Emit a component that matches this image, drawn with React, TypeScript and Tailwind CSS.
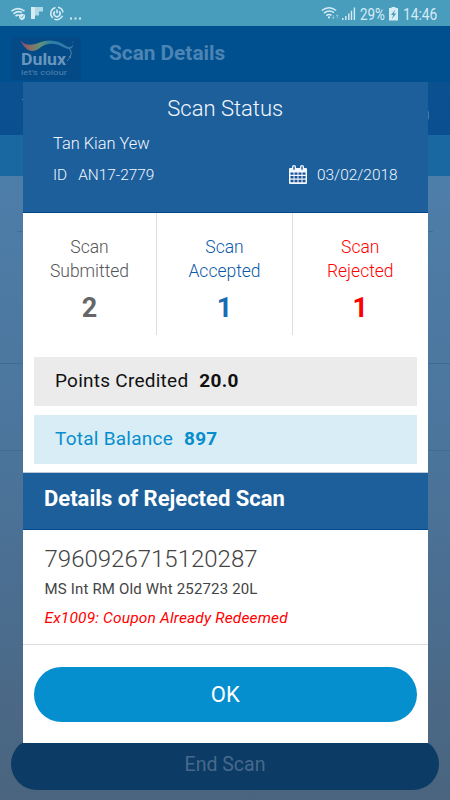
import type { ReactNode } from 'react';

const counts = [
  ['Scan', 'Submitted', '2', 'text-[#555]', 'text-[#666]'],
  ['Scan', 'Accepted', '1', 'text-[#0c59a8]', 'text-[#1b6bb2]'],
  ['Scan', 'Rejected', '1', 'text-[#ff0000]', 'text-[#ff0000]'],
];

function StatusBar() {
  return (
    <div className="flex h-[26px] shrink-0 items-center bg-[#489dbd] text-[#d5ecf5]">
      <svg className="h-[26px] w-[90px]" viewBox="0 0 90 26" fill="none" stroke="currentColor">
        <path d="M11.500 11.200Q18 6 24.500 11.200M13.500 13.800Q18 10 22 12.700M15.500 16.200Q17.500 14.500 19 15.400" strokeWidth="1.600" />
        <path d="M22 13.800l3 1v2.100q0 2.300-3 3.400-3-1.100-3-3.400v-2.100z" fill="currentColor" stroke="none" />
        <path d="M20.600 16.600l1.100 1.200 2-2.400" stroke="#489dbd" strokeWidth=".8" />
        <path d="M31 7h12v4.500h-4v4h-4V19h-4z" fill="currentColor" stroke="none" opacity=".75" />
        <path d="M31 7h4v12h-4z" fill="currentColor" stroke="none" />
        <path d="M55.500 7.400A6.200 6.200 0 0 0 52.800 18M54.300 19.100A6.200 6.200 0 0 0 62.500 15.800M63 12.500A6.200 6.200 0 0 0 58 7.300" strokeWidth="1.500" />
        <path d="M54.800 11.400a3.100 3.100 0 1 0 4.400 0M57 9.500v3.700" strokeWidth="1.600" />
        <path d="M70 17.500h2v2h-2zM74.500 17.500h2v2h-2zM79 17.500h2v2h-2z" fill="currentColor" stroke="none" />
      </svg>
      <svg className="ml-auto h-[26px] w-[38px]" viewBox="320 0 38 26" fill="none" stroke="currentColor">
        <path d="M321.800 10.500Q329 5 336.200 10.500M324 13.200Q329 9.200 334 12.700M326.300 15.700Q329 13.600 331.500 15.300" strokeWidth="1.500" />
        <circle cx="329" cy="17.400" r="1.100" fill="currentColor" stroke="none" />
        <path d="M333.300 15v3.500m-1.200-1.300 1.200 1.400 1.200-1.400M337.300 18.500v-3.700m-1.200 1.300 1.200-1.300 1.200 1.300" opacity=".5" strokeWidth=".9" />
        <path d="M342.800 18v2M345.800 16v4M348.800 13.500V20M351.500 10.800V20M354.400 7.500V20" strokeWidth="1.400" />
      </svg>
      <div className="w-[28px] pl-[2px] pt-[3px]">
        <span className="block w-[32px] origin-left scale-x-[0.84] text-[16px] leading-[26px]">29%</span>
      </div>
      <svg className="mt-px h-[14px] w-[14px]" viewBox="0 0 14 14">
        <path d="M5.500 0h4v1H12v12.500H3V1h2.500z" fill="currentColor" />
        <path d="M9 2.800 5 8h2.300L5.800 12l4.500-5.500H8z" fill="#489dbd" />
      </svg>
      <div className="w-[50px] pl-[2.500px] pt-[3px]">
        <span className="block w-[42px] origin-left scale-x-[0.86] text-[16px] leading-[26px]">14:46</span>
      </div>
    </div>
  );
}

function DuluxLogo() {
  return (
    <svg className="ml-[11px] mt-[11px] h-[43px] w-[70px] bg-[#034a87]" viewBox="0 0 70 43">
      <defs>
        <linearGradient id="ribbon">
          <stop offset="0" stopColor="#7a467e" />
          <stop offset=".18" stopColor="#8f6a62" />
          <stop offset=".38" stopColor="#619078" />
          <stop offset=".6" stopColor="#2c80a8" />
          <stop offset="1" stopColor="#3777ad" />
        </linearGradient>
      </defs>
      <path d="M9 3c4 5 11 6 18 3 12-5 21-2 28 3 4 2 6 1 7-2 0 5-3 6-8 4-9-5-16-6-24-1-8 7-15 5-21-7z" fill="url(#ribbon)" />
      <path d="M58 12c4 2 2 8-2 12m2-5 2 2" fill="none" stroke="#5584af" />
      <text x="10" y="27.700" fill="#6a96bd" fontSize="16" fontWeight="700" textLength="45" lengthAdjust="spacingAndGlyphs">Dulux</text>
      <text x="10" y="37.800" fill="#5182af" fontSize="8" textLength="46" lengthAdjust="spacingAndGlyphs">let's colour</text>
      <circle cx="62" cy="5" r=".8" fill="#315e8d" />
    </svg>
  );
}

function CalendarIcon() {
  return (
    <svg className="mb-[3px] h-[19px] w-[18px] shrink-0" viewBox="0 0 18 19" fill="none">
      <rect y="3" width="18" height="16" rx="1" fill="#f3f7ff" />
      <rect x="3" y="0" width="4" height="6" rx="2" fill="#f3f7ff" />
      <rect x="11" y="0" width="4" height="6" rx="2" fill="#f3f7ff" />
      <path d="M5 1.500v3.200M13 1.500v3.200" stroke="#174b8e" strokeWidth="1.300" />
      <path d="M1.500 7.500h3v2.300h-3zm4 0h3v2.300h-3zm4 0h3v2.300h-3zm4 0h3v2.300h-3zM1.500 11h3v2.500h-3zm4 0h3v2.500h-3zm4 0h3v2.500h-3zm4 0h3v2.500h-3zM1.500 14.700h3v2.500h-3zm4 0h3v2.500h-3zm4 0h3v2.500h-3zm4 0h3v2.500h-3z" fill="#1d5594" />
    </svg>
  );
}

function Amount({ className, children }: { className: string; children: ReactNode }) {
  return (
    <div className={`mx-[11px] flex h-[49px] items-center gap-[11px] pl-[21px] text-[19px] tracking-[0.25px] ${className}`}>
      {children}
    </div>
  );
}

function ScanDialog() {
  return (
    <div className="absolute left-[23px] top-[82px] flex h-[661px] w-[404.500px] flex-col bg-white">
      <header className="h-[131px] shrink-0 border-b border-[#00458b] bg-[#1d5f9b] px-[30px] pt-[11px] font-light text-[#f2f7ff]">
        <h2 className="text-center text-[22px] leading-[31px]">Scan Status</h2>
        <p className="mt-[10px] text-[16.400px] leading-[20px]">Tan Kian Yew</p>
        <div className="mt-[10px] flex h-[24px] items-center text-[15.400px]">
          <span>ID</span>
          <span className="ml-[11px]">AN17-2779</span>
          <span className="ml-auto flex items-center gap-[10px]">
            <CalendarIcon />
            <span>03/02/2018</span>
          </span>
        </div>
      </header>

      <div className="grid h-[122px] shrink-0 grid-cols-[134px_136px_134.500px]">
        {counts.map(([first, second, value, color, valueColor]) => (
          <div className="border-r border-[#dedede] pt-[22px] text-center last:border-r-0" key={second}>
            <p className={`text-[17.500px] font-light leading-[24px] ${color}`}>{first}<br />{second}</p>
            <p className={`mt-[10px] text-[27px] font-bold leading-[30px] ${valueColor}`}>{value}</p>
          </div>
        ))}
      </div>

      <div className="flex h-[137px] shrink-0 flex-col gap-[9px] pt-[22px]">
        <Amount className="bg-[#ebebeb] text-[#111]">
          <span>Points Credited</span><b>20.0</b>
        </Amount>
        <Amount className="bg-[#d9edf6] text-[#078dcc]">
          <span>Total Balance</span><b>897</b>
        </Amount>
      </div>

      <h3 className="flex h-[58px] shrink-0 items-center border-b border-t border-b-[#004b91] border-t-[#bac9dc] bg-[#1d5f9b] pb-[5px] pl-[21px] text-[22px] font-bold text-white">
        Details of Rejected Scan
      </h3>
      <section className="h-[115px] shrink-0 border-b border-[#ddd] pl-[21.500px] pt-[14px]">
        <p className="text-[24px] font-light leading-[30px] text-[#444]">7960926715120287</p>
        <p className="mt-[4px] text-[15px] leading-[22px] tracking-[0.170px] text-[#444]">MS Int RM Old Wht 252723 20L</p>
        <p className="mt-[7px] text-[15.500px] italic leading-[22px] tracking-[0.160px] text-[#f00]">Ex1009: Coupon Already Redeemed</p>
      </section>
      <button className="mx-[11px] mt-[22px] h-[55px] shrink-0 rounded-full bg-[#058fcf] text-[22px] text-white" type="button">
        OK
      </button>
    </div>
  );
}

export default function App() {
  return (
    <main className="relative flex h-[800px] w-[450px] flex-col overflow-hidden bg-[#4a6580] font-['Roboto',sans-serif]">
      <StatusBar />
      <header className="flex h-[56px] shrink-0 bg-[#00508f]">
        <DuluxLogo />
        <h1 className="ml-[28px] mt-[12px] text-[20.800px] font-bold leading-[30px] text-[#4c84b3]">Scan Details</h1>
      </header>
      <div className="flex h-[53px] shrink-0 items-start justify-between bg-linear-to-b from-[#0b508f] to-[#0a4f90] pl-[22px] pr-[21px]">
        <span className="mt-[17px] h-px w-[4px] bg-[#5c8bb7]" />
        <span className="mt-[28px] h-[10px] w-[5px] rounded-full bg-[#4479aa]" />
      </div>
      <div className="h-[41px] shrink-0 bg-[#1a68a2]" />
      <div className="flex flex-1 flex-col bg-linear-to-b from-[#4d7ea9] via-[#4b7399] to-[#4a647e]">
        <div className="mx-[17px] h-[56px] border-b border-[#416e99]" />
        <div className="h-[132px] border-b border-[#3d6b93]" />
        <div className="h-[87px] border-b border-[#426b90]" />
        <div className="mx-[11px] mb-[10px] mt-auto flex h-[52px] items-center justify-center rounded-full bg-[#0c3b65] pt-[1px] text-[19.500px] text-[#47698b]">
          End Scan
        </div>
      </div>
      <ScanDialog />
    </main>
  );
}
